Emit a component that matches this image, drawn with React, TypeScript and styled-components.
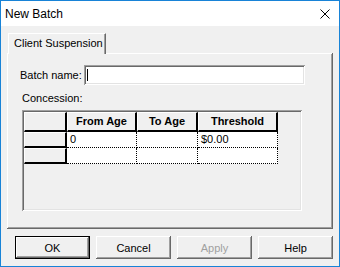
import { Fragment } from 'react';
import styled, { createGlobalStyle, css } from 'styled-components';

const GlobalStyle = createGlobalStyle`
  html, body {
    margin: 0;
    padding: 0;
    background: #ffffff;
  }
  body {
    font-family: "Liberation Sans", Arial, sans-serif;
    font-size: 11px;
    color: #000000;
  }
`;

const raised = css`
  box-shadow: inset -1px -1px #696969, inset 1px 1px #ffffff,
    inset -2px -2px #a0a0a0, inset 2px 2px #f0f0f0;
`;

const sunken = css`
  box-shadow: inset 1px 1px #a0a0a0, inset -1px -1px #ffffff,
    inset 2px 2px #696969, inset -2px -2px #e3e3e3;
`;

const Window = styled.div`
  width: 340px;
  height: 267px;
  box-sizing: border-box;
  border: 1px solid #1883d7;
  display: flex;
  flex-direction: column;
  background: #f0f0f0;
`;

const TitleBar = styled.div`
  height: 25px;
  flex: none;
  background: #ffffff;
  display: flex;
  align-items: center;
  justify-content: space-between;
  padding: 0 9px 0 4px;
  font-size: 12px;
`;

const Body = styled.div`
  flex: 1;
  display: flex;
  flex-direction: column;
  padding: 7px 6px 0 6px;
`;

const TabStrip = styled.div`
  display: flex;
  height: 20px;
  padding-left: 1px;
`;

const Tab = styled.div`
  position: relative;
  z-index: 1;
  width: 98px;
  height: 21px;
  box-sizing: border-box;
  background: #f0f0f0;
  border-top: 1px solid #ffffff;
  border-left: 1px solid #ffffff;
  border-right: 1px solid #696969;
  box-shadow: inset -1px 0 #a0a0a0;
  padding: 3px 0 0 5px;
  line-height: 13px;
  white-space: nowrap;
`;

const Panel = styled.div`
  height: 176px;
  box-sizing: border-box;
  ${raised};
  padding: 12px 12px 0 13px;
  display: flex;
  flex-direction: column;
`;

const FieldRow = styled.div`
  display: flex;
  align-items: center;
  height: 20px;
`;

const Label = styled.span`
  width: 64px;
  line-height: 13px;
`;

const TextField = styled.div`
  width: 221px;
  height: 20px;
  box-sizing: border-box;
  background: #ffffff;
  ${sunken};
  display: flex;
  align-items: center;
  padding-left: 3px;
`;

const Caret = styled.div`
  width: 1px;
  height: 12px;
  background: #000000;
`;

const SectionLabel = styled.div`
  margin: 7px 0 5px 2px;
  line-height: 13px;
`;

const Grid = styled.div`
  margin-left: 2px;
  width: 280px;
  height: 101px;
  box-sizing: border-box;
  padding: 2px;
  background: #f0f0f0;
  ${sunken};
`;

const GridBody = styled.div`
  display: grid;
  grid-template-columns: 43px 70px 61px 80px;
  grid-template-rows: 20px 16px 16px;
`;

const FixedCell = styled.div<{ $bold?: boolean }>`
  box-sizing: border-box;
  background: #f0f0f0;
  border-top: 1px solid #ffffff;
  border-left: 1px solid #ffffff;
  border-right: 2px solid #000000;
  border-bottom: 2px solid #000000;
  font-weight: ${(p) => (p.$bold ? 700 : 400)};
  display: flex;
  align-items: center;
  justify-content: center;
  line-height: 13px;
`;

const DataCell = styled.div`
  box-sizing: border-box;
  background: #ffffff;
  border-right: 1px dotted #000000;
  border-bottom: 1px dotted #000000;
  padding-left: 3px;
  display: flex;
  align-items: center;
  line-height: 13px;
`;

const ButtonRow = styled.div`
  display: flex;
  gap: 6px;
  margin: 7px 0 0 8px;
`;

const Button = styled.div<{ $default?: boolean; $disabled?: boolean }>`
  width: 75px;
  height: 23px;
  box-sizing: border-box;
  display: flex;
  align-items: center;
  justify-content: center;
  background: #f0f0f0;
  color: ${(p) => (p.$disabled ? '#a0a0a0' : '#000000')};
  ${(p) =>
    p.$default
      ? css`
          box-shadow: inset 0 0 0 1px #000000, inset -2px -2px #696969,
            inset 2px 2px #ffffff, inset -3px -3px #a0a0a0;
        `
      : raised};
`;

const CloseIcon = () => (
  <svg width="10" height="10" viewBox="0 0 10 10">
    <path d="M0.5 0.5 L9.5 9.5 M9.5 0.5 L0.5 9.5" stroke="#000" strokeWidth="1" />
  </svg>
);

const columns = ['From Age', 'To Age', 'Threshold'];
const rows = [
  ['0', '', '$0.00'],
  ['', '', ''],
];

export default function App() {
  return (
    <>
      <GlobalStyle />
      <Window>
        <TitleBar>
          <span>New Batch</span>
          <CloseIcon />
        </TitleBar>
        <Body>
          <TabStrip>
            <Tab>Client Suspension</Tab>
          </TabStrip>
          <Panel>
            <FieldRow>
              <Label>Batch name:</Label>
              <TextField>
                <Caret />
              </TextField>
            </FieldRow>
            <SectionLabel>Concession:</SectionLabel>
            <Grid>
              <GridBody>
                <FixedCell />
                {columns.map((c) => (
                  <FixedCell key={c} $bold>
                    {c}
                  </FixedCell>
                ))}
                {rows.map((r, i) => (
                  <Fragment key={i}>
                    <FixedCell />
                    {r.map((v, j) => (
                      <DataCell key={j}>{v}</DataCell>
                    ))}
                  </Fragment>
                ))}
              </GridBody>
            </Grid>
          </Panel>
          <ButtonRow>
            <Button $default>OK</Button>
            <Button>Cancel</Button>
            <Button $disabled>Apply</Button>
            <Button>Help</Button>
          </ButtonRow>
        </Body>
      </Window>
    </>
  );
}
